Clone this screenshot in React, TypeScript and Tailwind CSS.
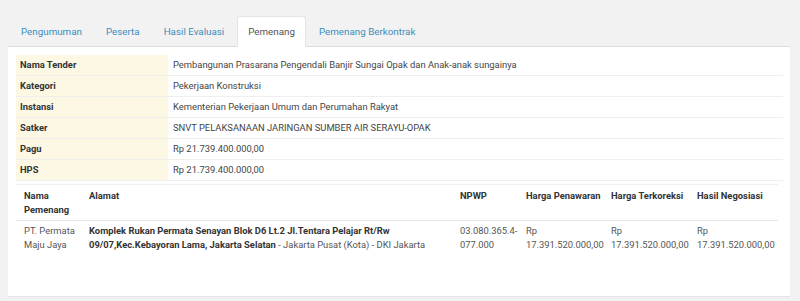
import React from "react";

const tabs = ["Pengumuman", "Peserta", "Hasil Evaluasi", "Pemenang", "Pemenang Berkontrak"];

const info: [string, string][] = [
  ["Nama Tender", "Pembangunan Prasarana Pengendali Banjir Sungai Opak dan Anak-anak sungainya"],
  ["Kategori", "Pekerjaan Konstruksi"],
  ["Instansi", "Kementerian Pekerjaan Umum dan Perumahan Rakyat"],
  ["Satker", "SNVT PELAKSANAAN JARINGAN SUMBER AIR SERAYU-OPAK"],
  ["Pagu", "Rp 21.739.400.000,00"],
  ["HPS", "Rp 21.739.400.000,00"],
];

export default function App() {
  return (
    <div
      className="h-[301px] w-[800px] bg-[#f2f2f2] pt-[16px] text-[9.4px] leading-[14px] text-[#333]"
      style={{ fontFamily: "Roboto, 'Liberation Sans', sans-serif" }}
    >
      <div className="mx-[8px] w-[782px]">
        {/* tabs */}
        <ul className="flex border-b border-[#ddd] pl-[1.5px] text-[9.8px]">
          {tabs.map((t) => {
            const active = t === "Pemenang";
            return (
              <li key={t} className="-mb-px mr-[1px]">
                <a
                  className={
                    active
                      ? "block rounded-t-[3px] border border-[#e4e4e4] border-b-white bg-white px-[10.5px] py-[7.5px] text-[#555]"
                      : "block border border-transparent px-[10.5px] py-[7.5px] text-[#3c8dbc]"
                  }
                >
                  {t}
                </a>
              </li>
            );
          })}
        </ul>

        {/* panel */}
        <div className="h-[249px] bg-white px-[8px] pt-[8px] shadow-[0_1px_1px_rgba(0,0,0,0.05)]">
          <table className="w-[767px] table-fixed border-collapse">
            <tbody>
              {info.map(([k, v]) => (
                <tr key={k} className="border-b border-[#eee]">
                  <td className="w-[152px] bg-[#fcf8e3] px-[4px] py-[3px] font-bold">{k}</td>
                  <td className="px-[5px] py-[3px] text-[#444]">{v}</td>
                </tr>
              ))}
            </tbody>
          </table>

          <table className="mt-[3px] w-[762px] table-fixed border-collapse border-t border-[#f0f0f0]">
            <thead>
              <tr className="border-b border-[#e6e6e6] text-left align-top font-bold">
                <th className="w-[69px] pb-[3px] pl-[8px] pr-[4px] pt-[4px]">Nama Pemenang</th>
                <th className="w-[371px] px-[4px] pb-[3px] pt-[4px]">Alamat</th>
                <th className="w-[66px] px-[4px] pb-[3px] pt-[4px]">NPWP</th>
                <th className="w-[85px] px-[4px] pb-[3px] pt-[4px]">Harga Penawaran</th>
                <th className="w-[86px] px-[4px] pb-[3px] pt-[4px]">Harga Terkoreksi</th>
                <th className="w-[85px] px-[4px] pb-[3px] pt-[4px]">Hasil Negosiasi</th>
              </tr>
            </thead>
            <tbody>
              <tr className="align-top text-[#555]">
                <td className="pl-[8px] pr-[4px] pt-[3px]">PT. Permata Maju Jaya</td>
                <td className="px-[4px] pt-[3px]">
                  <b className="text-[#333]">
                    Komplek Rukan Permata Senayan Blok D6 Lt.2 Jl.Tentara Pelajar Rt/Rw
                    09/07,Kec.Kebayoran Lama, Jakarta Selatan
                  </b>{" "}
                  - Jakarta Pusat (Kota) - DKI Jakarta
                </td>
                <td className="px-[4px] pt-[3px]">03.080.365.4-077.000</td>
                <td className="px-[4px] pt-[3px]">Rp 17.391.520.000,00</td>
                <td className="px-[4px] pt-[3px]">Rp 17.391.520.000,00</td>
                <td className="px-[4px] pt-[3px]">Rp 17.391.520.000,00</td>
              </tr>
            </tbody>
          </table>
        </div>
      </div>
    </div>
  );
}
